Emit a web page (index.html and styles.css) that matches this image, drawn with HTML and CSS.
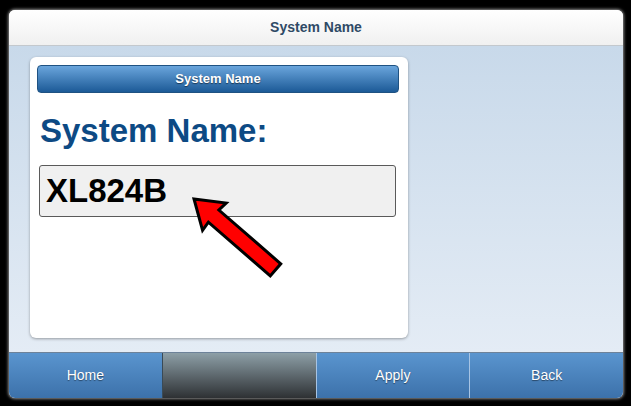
FILE: index.html
```html
<!DOCTYPE html>
<html lang="en">
<head>
  <meta charset="UTF-8">
  <title>System Name</title>
  <link rel="stylesheet" href="styles.css">
</head>
<body>

<div class="screen">
  <div class="top-bar">System Name</div>

  <div class="content">
    <div class="card">
      <div class="card-title">System Name</div>
      <h1 class="field-label">System Name:</h1>
      <div class="field-value">XL824B</div>
    </div>
  </div>

  <div class="nav-bar">
    <a class="nav-btn" href="#">Home</a>
    <a class="nav-btn active" href="#"></a>
    <a class="nav-btn" href="#">Apply</a>
    <a class="nav-btn" href="#">Back</a>
  </div>
</div>

<!-- callout arrow pointing at the value -->
<svg class="callout" width="631" height="406" viewBox="0 0 631 406">
  <g transform="translate(194,199) rotate(41)">
    <polygon points="0,0 27,-18 26,-8 108,-8 108,8 26,8 27,18"
             fill="#ff0000" stroke="#000" stroke-width="3" stroke-linejoin="miter"/>
  </g>
</svg>

</body>
</html>
```

FILE: styles.css
```css
body {
  margin: 0;
  width: 631px;
  height: 406px;
  background: #000;
  font-family: "Liberation Sans", Arial, sans-serif;
  position: relative;
  overflow: hidden;
}

.screen {
  margin: 10px 0 0 9px;
  width: 614px;
  height: 388px;
  display: flex;
  flex-direction: column;
  border-radius: 6px;
  box-shadow: 0 0 3px 1px #8c8c8c;
  background: #fff;
}

.top-bar {
  height: 35px;
  line-height: 35px;
  text-align: center;
  font-size: 14px;
  font-weight: bold;
  color: #2f4a66;
  background: linear-gradient(#ffffff, #f0f0f0);
  border-bottom: 1px solid #c3c8cd;
  border-radius: 6px 6px 0 0;
}

.content {
  flex: 1;
  padding: 11px 0 0 21px;
  background: linear-gradient(#c8d9ea, #e4ecf5);
}

.card {
  width: 362px;
  height: 265px;
  padding: 8px 9px 8px 7px;
  background: #fff;
  border-radius: 6px;
  box-shadow: 0 1px 3px rgba(0, 0, 0, 0.35);
}

.card-title {
  height: 26px;
  line-height: 26px;
  text-align: center;
  font-size: 13px;
  font-weight: bold;
  color: #fff;
  text-shadow: 0 1px 1px rgba(0, 0, 0, 0.5);
  background: linear-gradient(#6aa5dc, #1c5a97);
  border: 1px solid #1f5282;
  border-radius: 4px;
}

.field-label {
  margin: 19px 0 15px 3px;
  font-size: 33px;
  line-height: 38px;
  font-weight: bold;
  color: #0d4a84;
}

.field-value {
  margin-left: 2px;
  width: 343px;
  height: 50px;
  line-height: 50px;
  padding: 0 6px;
  font-size: 33px;
  font-weight: bold;
  color: #000;
  background: #f0f0f0;
  border: 1px solid #5a5a5a;
  border-radius: 3px;
}

.nav-bar {
  height: 45px;
  display: flex;
  border-top: 1px solid #6d8299;
  border-radius: 0 0 6px 6px;
  overflow: hidden;
}

.nav-btn {
  flex: 1;
  line-height: 45px;
  text-align: center;
  font-size: 14px;
  color: #fff;
  text-decoration: none;
  text-shadow: 0 1px 1px rgba(0, 0, 0, 0.45);
  background: linear-gradient(#5a95cf, #3c71aa);
  border-left: 1px solid #a7c4e4;
}

.nav-btn:first-child {
  border-left: none;
}

.nav-btn.active {
  background: linear-gradient(#8d9fa7, #2e3134);
  border-left-color: #3a4a56;
}

.callout {
  position: absolute;
  top: 0;
  left: 0;
  pointer-events: none;
}
```
